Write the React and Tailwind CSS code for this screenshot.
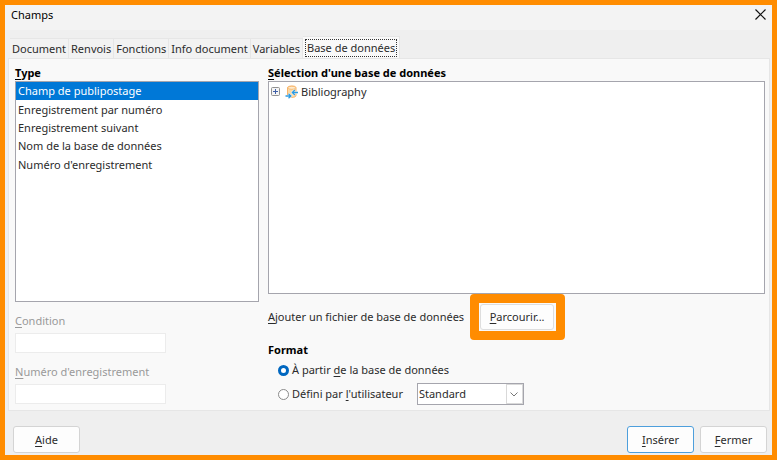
import { useState } from "react";
import clsx from "clsx";

const tabs = ["Document", "Renvois", "Fonctions", "Info document", "Variables", "Base de données"];

const fieldTypes = [
  "Champ de publipostage",
  "Enregistrement par numéro",
  "Enregistrement suivant",
  "Nom de la base de données",
  "Numéro d'enregistrement",
];

// underlined access key inside a label
const Key = ({ children }) => (
  <span className="underline decoration-1 underline-offset-2">{children}</span>
);

const DatabaseIcon = () => (
  <svg width="14" height="14" viewBox="0 0 14 14" fill="none" className="shrink-0" aria-hidden="true">
    <path d="M2.500 2.800C2.500 1.500 4.500 1 7 1s4 .6 4 1.800v7.700c0 1.200-1.700 1.900-4.500 1.900s-4-.7-4-1.900z" fill="#fbd9a5" stroke="#f8b56b" />
    <ellipse cx="6.800" cy="2.800" rx="3.800" ry="1.500" fill="#fdebce" stroke="#f8b56b" strokeWidth=".8" />
    <path d="M13 7.500H7.500M9.800 5 7.300 7.500 9.800 10M.500 11H5.500M3.500 8.700 6 11 3.500 13.300" stroke="#fff" strokeWidth="2.200" />
    <path d="M13 7.500H7.500M9.800 5 7.300 7.500 9.800 10M.500 11H5.500M3.500 8.700 6 11 3.500 13.300" stroke="#2f9be0" strokeWidth="1.300" />
  </svg>
);

const DialogButton = ({ primary, children }) => (
  <button
    type="button"
    className={clsx(
      "h-[27px] w-[67px] rounded-[3px] border bg-[#fdfdfd]",
      primary ? "border-[#4d9fdc]" : "border-[#d4d4d4]"
    )}
  >
    {children}
  </button>
);

const App = () => {
  const [tab, setTab] = useState("Base de données");
  const [type, setType] = useState(fieldTypes[0]);
  const [format, setFormat] = useState("database");

  const radioStyle =
    "size-[11px] shrink-0 appearance-none rounded-full border border-[#8a8a8a] bg-white checked:border-[3px] checked:border-[#0067c0]";

  return (
    <div className="flex min-h-screen flex-col border-[5px] border-[#ff8c00] bg-[#efefef] font-['Noto_Sans',sans-serif] text-[11px] leading-[16px] text-[#2b2b2b]">
      <header className="flex h-[25px] items-start justify-between bg-[#f3f3f3] pt-[2px] pr-[6px] pl-[6px] text-black">
        <h1>Champs</h1>
        <button type="button" aria-label="Fermer la fenêtre" className="pt-[2px]">
          <svg width="11" height="11" viewBox="0 0 11 11" stroke="#111" strokeWidth="1.200">
            <path d="M.500.500l10 10M10.500.500l-10 10" />
          </svg>
        </button>
      </header>

      <div role="tablist" className="flex h-[28px] items-end pl-[5px]">
        {tabs.map((name) => (
          <button
            key={name}
            type="button"
            role="tab"
            aria-selected={tab === name}
            onClick={() => setTab(name)}
            className={clsx(
              "border-t border-r border-[#e6e6e6] whitespace-nowrap",
              tab === name ? "h-[22px] bg-[#f9f9f9] px-[2px]" : "h-[20px] bg-[#f2f2f2] px-[2px]"
            )}
          >
            {tab === name ? (
              <span className="block border border-dotted border-[#333333] px-px">{name}</span>
            ) : (
              name
            )}
          </button>
        ))}
      </div>

      <main className="mr-[2px] ml-[3px] grid flex-1 grid-cols-[244fr_497fr] gap-x-[9px] border border-[#e6e6e6] bg-[#f9f9f9] pt-[6px] pr-[4px] pb-[5px] pl-[6px]">
        <section className="flex flex-col pb-px">
          <h2 className="font-bold text-black">
            <Key>T</Key>ype
          </h2>
          <ul role="listbox" aria-label="Type" className="flex-1 border border-[#a5a5ad] bg-white">
            <div className="grid h-[92px] grid-rows-5">
              {fieldTypes.map((name) => (
                <li
                  key={name}
                  role="option"
                  aria-selected={type === name}
                  onClick={() => setType(name)}
                  className={clsx(
                    "flex cursor-default items-center px-[2px]",
                    type === name && "bg-[#0078d7] text-white"
                  )}
                >
                  {name}
                </li>
              ))}
            </div>
          </ul>
          <label htmlFor="condition" className="mt-[11px] text-[#999999]">
            <Key>C</Key>ondition
          </label>
          <input id="condition" disabled className="mt-[4px] h-[20px] w-[151px] border border-[#ececec] bg-white" />
          <label htmlFor="record" className="mt-[11px] text-[#999999]">
            <Key>N</Key>uméro d'enregistrement
          </label>
          <input id="record" disabled className="mt-[4px] h-[20px] w-[151px] border border-[#ececec] bg-white" />
        </section>

        <section className="flex flex-col">
          <h2 className="font-bold text-black">
            <Key>S</Key>élection d'une base de données
          </h2>
          <ul role="tree" className="flex-1 border border-[#a5a5ad] bg-white">
            <li role="treeitem" className="flex h-[19px] items-center pl-[2px]">
              <button type="button" aria-label="Développer" className="mr-[5px]">
                <svg width="9" height="9" viewBox="0 0 9 9" className="block">
                  <rect x=".5" y=".5" width="8" height="8" rx="1" fill="#f4f4f4" stroke="#919191" />
                  <path d="M2 4.500h5M4.500 2v5" stroke="#3f5fa8" />
                </svg>
              </button>
              <DatabaseIcon />
              <span className="ml-[2px]">Bibliography</span>
            </li>
          </ul>

          <div className="flex items-center">
            <span>
              <Key>A</Key>jouter un fichier de base de données
            </span>
            <div className="ml-[6px] rounded-[4px] border-[9px] border-[#ff8c00] bg-[#f9f9f9] py-px pr-[2px] pl-px">
              <button type="button" className="block h-[26px] w-[74px] rounded-[3px] border border-[#dedede] bg-[#fdfdfd]">
                <Key>P</Key>arcourir...
              </button>
            </div>
          </div>

          <h2 className="mt-[2px] font-bold text-black">Format</h2>
          <label className="mt-[4px] flex items-center gap-[3px] pl-[10px]">
            <input
              type="radio"
              name="format"
              checked={format === "database"}
              onChange={() => setFormat("database")}
              className={radioStyle}
            />
            <span>
              À partir <Key>d</Key>e la base de données
            </span>
          </label>
          <div className="mt-[5px] flex items-center pl-[10px]">
            <label className="flex items-center gap-[3px]">
              <input
                type="radio"
                name="format"
                checked={format === "user"}
                onChange={() => setFormat("user")}
                className={radioStyle}
              />
              <span>
                Défini par <Key>l</Key>'utilisateur
              </span>
            </label>
            <div className="relative ml-[14px]">
              <select
                aria-label="Format défini par l'utilisateur"
                className="block h-[22px] w-[107px] appearance-none border border-[#a5a5ad] bg-white pl-px"
              >
                <option>Standard</option>
              </select>
              <span className="pointer-events-none absolute inset-y-px right-px flex w-[17px] items-center justify-center border border-[#d9d9d9] bg-white">
                <svg width="8" height="5" viewBox="0 0 8 5" fill="none" stroke="#777">
                  <path d="M.500.500 4 4 7.500.500" />
                </svg>
              </span>
            </div>
          </div>
        </section>
      </main>

      <footer className="flex gap-[6px] px-[8px] pt-[15px] pb-[2px] pr-[5px]">
        <div className="mr-auto">
          <DialogButton>
            <Key>A</Key>ide
          </DialogButton>
        </div>
        <DialogButton primary>
          <Key>I</Key>nsérer
        </DialogButton>
        <DialogButton>
          <Key>F</Key>ermer
        </DialogButton>
      </footer>
    </div>
  );
};

export default App;
